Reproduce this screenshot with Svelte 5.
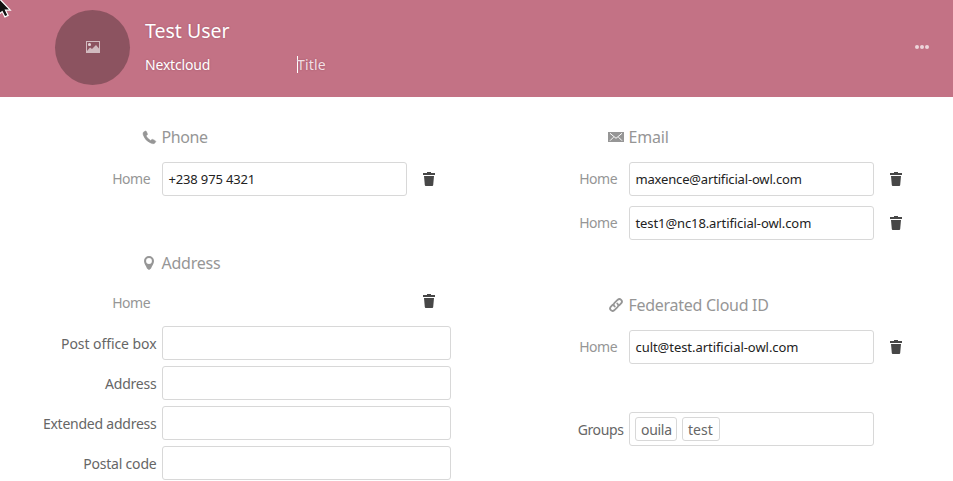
<script>
  const addressFields = [
    { label: 'Post office box', fit: 'post' },
    { label: 'Address', fit: 'addr' },
    { label: 'Extended address', fit: 'ext' },
    { label: 'Postal code', fit: 'code' }
  ];
  const emails = [
    { value: 'maxence@artificial-owl.com', fit: 'mail1' },
    { value: 'test1@nc18.artificial-owl.com', fit: 'mail2' }
  ];
  const groups = ['ouila', 'test'];
</script>

{#snippet trash()}
  <button class="trash" aria-label="Delete">
    <svg width="12" height="14" viewBox="0 0 12 14">
      <path d="M4 0h4v1h4v2H0V1h4zM1 4h10l-.8 9q-.1 1-1 1H2.800q-.9 0-1-1z" fill="#474747" />
    </svg>
  </button>
{/snippet}

{#snippet property(value, fit)}
  <div class="row">
    <span class="label type"><span>Home</span></span>
    <div class="field"><span class={fit}>{value}</span></div>
    {@render trash()}
  </div>
{/snippet}

<div class="page">
  <header>
    <div class="avatar">
      <svg width="14" height="12" viewBox="0 0 14 12">
        <path fill="#fff" fill-opacity=".6" fill-rule="evenodd" d="M0 0h14v12H0zM1 1v9l3-3.500 2 1.500 4-4 3 3.500V1zM3.500 2a1.500 1.500 0 1 1 0 3 1.500 1.500 0 0 1 0-3z" />
        <circle cx="3.500" cy="3.500" r="1.500" fill="#fff" fill-opacity=".4" />
      </svg>
    </div>
    <div class="identity">
      <div class="name"><span>Test User</span></div>
      <div class="sub">
        <div class="org"><span>Nextcloud</span></div>
        <div class="job"><i></i><span>Title</span></div>
      </div>
    </div>
    <button class="more" aria-label="Actions">
      <svg width="14" height="4" viewBox="0 0 14 4" fill="#fff" fill-opacity=".7">
        <circle cx="2" cy="2" r="2" /><circle cx="7" cy="2" r="2" /><circle cx="12" cy="2" r="2" />
      </svg>
    </button>
    <svg class="pointer" width="13" height="20" viewBox="0 0 13 20">
      <path d="M-4-5L10.300 10.200H5.500L8.100 15.400 4.900 16.900 2.200 11.600-2 15z" fill="#111" stroke="#fff" stroke-width="1.200" />
    </svg>
  </header>

  <main>
    <div class="column">
      <section class="phone">
        <h3>
          <span class="icon"><svg width="13" height="13" viewBox="0 0 14 14"><path fill="#969696" stroke="#969696" stroke-width=".5" d="M.6 1.200L2.500 0q.8-.2 1.200.6l1.100 2.500q.2.700-.3 1.100l-1.200 1Q4.800 8.300 8.200 10.200l1.300-1q.6-.4 1.200-.1l2.500 1.300q.8.500.5 1.300-.4 1-1.500 1.700-1.200.7-3.400-.2Q2.400 10.600.2 4.200-.3 2 .6 1.200z" /></svg></span>
          <span class="t-phone">Phone</span>
        </h3>
        {@render property('+238 975 4321', 'tel')}
      </section>
      <section>
        <h3>
          <span class="icon"><svg width="10" height="14" viewBox="0 0 10 14"><path fill="#969696" fill-rule="evenodd" d="M5 0a5 5 0 0 1 5 5c0 2.600-2 4.800-3 7.600L5 14l-2-1.400C2 9.800 0 7.600 0 5a5 5 0 0 1 5-5zM5 2.100a2.900 2.900 0 1 0 0 5.800 2.900 2.900 0 0 0 0-5.800z" /></svg></span>
          <span class="t-address">Address</span>
        </h3>
        <div class="row kind">
          <span class="label type"><span>Home</span></span>
          <div class="blank"></div>
          {@render trash()}
        </div>
        {#each addressFields as item}
          <div class="row line">
            <span class="label"><span class={item.fit}>{item.label}</span></span>
            <div class="field wide"></div>
          </div>
        {/each}
      </section>
    </div>

    <div class="column">
      <section class="email">
        <h3>
          <span class="icon"><svg width="16" height="10" viewBox="0 0 16 10"><path fill="#969696" d="M0 0h16v10H0z" /><path fill="none" stroke="#fff" stroke-width="1" d="M2 1.300l6 5 6-5M2 8.700l3.500-3.500M14 8.700l-3.500-3.500" /></svg></span>
          <span class="t-email">Email</span>
        </h3>
        {#each emails as mail}
          {@render property(mail.value, mail.fit)}
        {/each}
      </section>
      <section class="cloud">
        <h3>
          <span class="icon"><svg width="14" height="14" viewBox="0 0 14 14"><g fill="none" stroke="#969696" stroke-width="1.800" stroke-linecap="round"><path d="M5.800 8.500C4.300 7.500 4.500 5.800 5.500 4.800L8.800 1.700C11-.2 14.300 2.700 12.300 5.200L10.200 7.300" /><path d="M8.200 5.500c1.500 1 1.300 2.700.3 3.700L5.200 12.300C3 14.200-.3 11.300 1.700 8.800L3.800 6.700" /></g></svg></span>
          <span class="t-cloud">Federated Cloud ID</span>
        </h3>
        {@render property('cult@test.artificial-owl.com', 'mail3')}
      </section>
      <div class="row">
        <span class="label"><span class="grp">Groups</span></span>
        <div class="field tags">
          {#each groups as group}<span class="tag"><span class={group}>{group}</span></span>{/each}
        </div>
      </div>
    </div>
  </main>
</div>

<style>
  :global(body) { margin: 0; overflow: hidden; background: #fff; }
  .page { width: 953px; height: 481px; overflow: hidden; font-family: "Noto Sans", "Open Sans", sans-serif; font-size: 14px; color: #666; white-space: nowrap; }
  .page * { box-sizing: border-box; }
  svg { display: block; overflow: visible; }
  button { border: 0; padding: 0; background: none; }
  header { position: relative; height: 97px; background: #c37285; display: flex; padding: 10px 24px 0 55px; overflow: hidden; color: #fff; }
  .avatar { width: 75px; height: 75px; border-radius: 50%; background: #8c5360; display: flex; align-items: center; justify-content: center; padding-bottom: 1px; }
  .identity { margin-left: 15px; flex: 1; text-shadow: 0 0 2px rgba(80, 20, 35, .3); }
  .name { height: 40px; line-height: 41px; font-size: 19.5px; }
  .sub { display: flex; line-height: 29px; height: 29px; }
  .org { width: 152px; letter-spacing: -.18px; }
  .job { display: flex; align-items: center; color: #f2dfe4; letter-spacing: .2px; }
  .job i { width: 1px; height: 17px; margin-right: -1px; background: #fff; }
  .more { height: 14px; margin-top: 30px; display: flex; align-items: center; }
  .pointer { position: absolute; left: 0; top: 0; }
  main { display: flex; padding-top: 25px; }
  .column { width: 467px; flex: none; }
  h3 { margin: 0 0 10px; height: 30px; display: flex; align-items: center; font-size: 16px; font-weight: 400; color: #969696; }
  .icon { width: 26px; margin-left: 136px; margin-right: -.5px; display: flex; justify-content: center; flex: none; }
  .row { display: flex; align-items: center; height: 34px; margin-bottom: 10px; }
  .label { width: 162px; padding-right: 5.500px; text-align: right; flex: none; }
  .type { padding-right: 11.800px; padding-bottom: 1px; color: #969696; letter-spacing: -.45px; }
  .field { width: 245px; height: 34px; border: 1px solid #d8d8d8; border-radius: 3px; padding-left: 5.500px; display: flex; align-items: center; font-size: 13px; color: #222; }
  .wide { width: 289px; }
  .blank { width: 245px; }
  .trash { width: 44px; display: flex; justify-content: center; }
  .phone { margin-bottom: 52px; }
  .email { margin-bottom: 50px; }
  .cloud { margin-bottom: 48px; }
  .kind { height: 30px; margin-top: -2px; }
  .kind .type { padding-top: 3px; padding-bottom: 0; }
  .line { margin-bottom: 6px; }
  .tags { padding-left: 5px; gap: 5px; color: #666; font-size: 14px; }
  .tag { height: 24px; border: 1px solid #d8d8d8; border-radius: 3px; padding: 0 5px; display: flex; align-items: center; }
  .tag:first-child { width: 42px; }
  .tag:last-child { width: 38px; }
  .post { letter-spacing: -.07px; }
  .addr { letter-spacing: -.22px; }
  .ext { letter-spacing: -.24px; }
  .code { letter-spacing: -.2px; }
  .grp { letter-spacing: -.38px; }
  .ouila { letter-spacing: -.3px; }
  .t-phone { letter-spacing: -.4px; }
  .t-address { letter-spacing: -.25px; }
  .t-email { letter-spacing: -.2px; }
  .t-cloud { letter-spacing: -.28px; }
  .tel { letter-spacing: -.15px; }
  .mail1 { letter-spacing: -.17px; }
  .mail2 { letter-spacing: -.1px; }
  .mail3 { letter-spacing: -.05px; }
</style>
